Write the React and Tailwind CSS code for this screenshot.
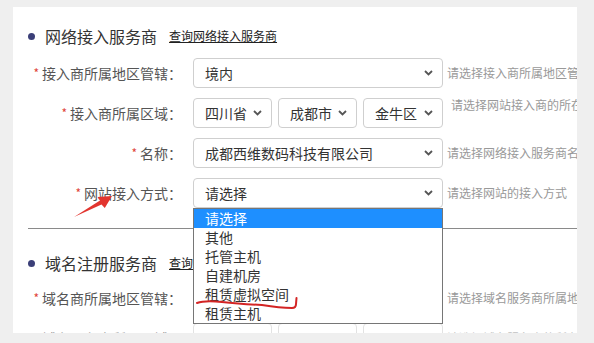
const font = { fontFamily: '"Microsoft YaHei", "Noto Sans CJK SC", "Noto Sans", sans-serif' };

const Chevron = () => (
  <svg width="9" height="6" viewBox="0 0 9 6" className="shrink-0">
    <path d="M1 1 L4.5 4.5 L8 1" fill="none" stroke="#555" strokeWidth="1.8" />
  </svg>
);

function Select({ value, className = '' }) {
  return (
    <div className={`h-[30px] shrink-0 flex items-center justify-between pl-[11px] pr-[9px] border border-[#cfcfcf] rounded-[4px] bg-white text-[14px] text-[#333] ${className}`}>
      <span className="whitespace-nowrap">{value}</span>
      <Chevron />
    </div>
  );
}

function Label({ text }) {
  return (
    <div className="w-[173px] shrink-0 flex justify-end items-center pr-[4px] text-[14px] text-[#555] whitespace-nowrap">
      <span className="text-[#e0443a] text-[12px] mr-[3px]">*</span>
      {text}：
    </div>
  );
}

function Hint({ text, top }) {
  return (
    <div className={`ml-[4px] text-[12px] text-[#999] whitespace-nowrap ${top ? 'self-start mt-[-2px] ml-[8px]' : ''}`}>
      {text}
    </div>
  );
}

function Heading({ title, link }) {
  return (
    <div className="flex items-center h-6 pl-[15px] whitespace-nowrap">
      <span className="w-[7px] h-[7px] rounded-full bg-[#3b3f78] mr-[10px]" />
      <span className="text-[16px] text-[#333]">{title}</span>
      <a className="ml-[12px] text-[12px] text-[#222] underline">{link}</a>
    </div>
  );
}

const options = ['请选择', '其他', '托管主机', '自建机房', '租赁虚拟空间', '租赁主机'];

export default function App() {
  return (
    <div className="relative w-[594px] h-[343px] bg-[#efefef] overflow-hidden pt-[7px] pl-[13px]" style={font}>
      <div className="relative w-[564px] h-[326px] bg-white overflow-hidden">
        <div className="pt-[17px]">
          <Heading title="网络接入服务商" link="查询网络接入服务商" />

          <div className="flex items-center h-[30px] mt-[10px]">
            <Label text="接入商所属地区管辖" />
            <div className="ml-[7px] flex items-center">
              <Select value="境内" className="w-[250px]" />
            </div>
            <Hint text="请选择接入商所属地区管辖" />
          </div>

          <div className="flex items-center h-[30px] mt-[10px]">
            <Label text="接入商所属区域" />
            <div className="ml-[7px] flex items-center gap-[6px]">
              <Select value="四川省" className="w-[79px]" />
              <Select value="成都市" className="w-[79px]" />
              <Select value="金牛区" className="w-[80px]" />
            </div>
            <Hint text="请选择网站接入商的所在区域" top />
          </div>

          <div className="flex items-center h-[30px] mt-[10px]">
            <Label text="名称" />
            <div className="ml-[7px] flex items-center">
              <Select value="成都西维数码科技有限公司" className="w-[250px]" />
            </div>
            <Hint text="请选择网络接入服务商名称" />
          </div>

          <div className="flex items-center h-[30px] mt-[10px]">
            <Label text="网站接入方式" />
            <div className="ml-[7px] flex items-center">
              <Select value="请选择" className="w-[250px]" />
            </div>
            <Hint text="请选择网站的接入方式" />
          </div>

          <div className="mt-[20px] ml-[15px] h-px bg-[#8a8a8a]" />

          <div className="mt-[22px]">
            <Heading title="域名注册服务商" link="查询域名注册服务商" />
          </div>

          <div className="flex items-center h-[30px] mt-[8px]">
            <Label text="域名商所属地区管辖" />
            <div className="ml-[7px] flex items-center">
              <Select value="境内" className="w-[250px]" />
            </div>
            <Hint text="请选择域名服务商所属地区管辖" />
          </div>

          <div className="flex items-center h-[30px] mt-[10px] opacity-60">
            <Label text="域名服务商所属区域" />
            <div className="ml-[7px] flex items-center gap-[6px]">
              <Select value="" className="w-[79px]" />
              <Select value="" className="w-[79px]" />
              <Select value="" className="w-[80px]" />
            </div>
            <Hint text="请选择域名服务商的所在区域" />
          </div>
        </div>

        <ul className="absolute left-[180px] top-[201px] w-[250px] border border-[#767676] bg-white text-[14px] text-[#333] py-0">
          {options.map((o, i) => (
            <li
              key={o}
              className={`h-[19px] leading-[19px] pl-[11px] whitespace-nowrap ${i === 0 ? 'bg-[#1e8fff] text-white' : ''}`}
            >
              {o}
            </li>
          ))}
        </ul>
      </div>

      <svg className="absolute left-0 top-0 pointer-events-none" width="594" height="343">
        <polygon
          points="74,217 101.5,204.5 104.8,208 112,196 97.5,197 100,200.5"
          fill="#e2352f"
        />
        <path
          d="M197 303 Q 205 300 222 302 T 262 305 Q 280 308 292 308 Q 296 308 296 304 L 296.5 298"
          fill="none"
          stroke="#d32424"
          strokeWidth="2"
          strokeLinecap="round"
        />
      </svg>
    </div>
  );
}
